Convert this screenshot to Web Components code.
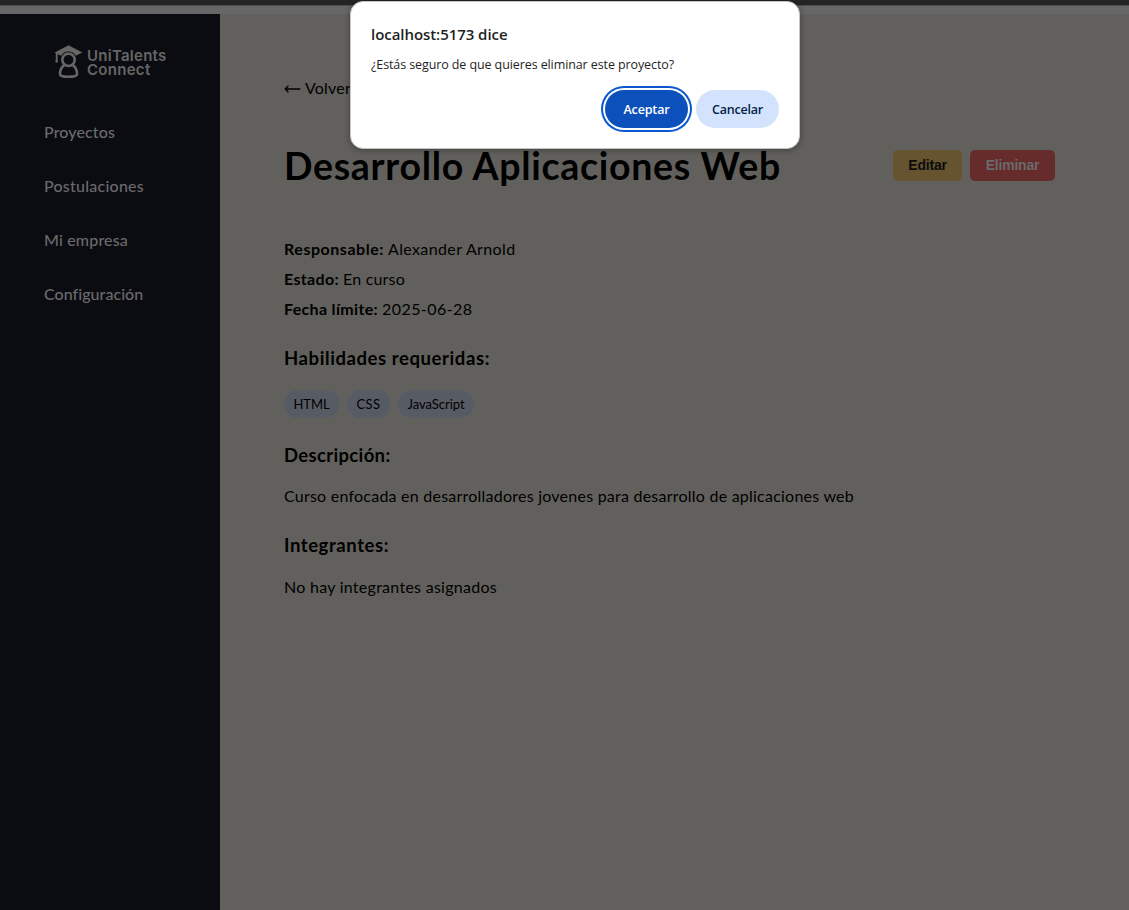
<!DOCTYPE html>
<html lang="es">
<head>
<meta charset="utf-8">
<title>UniTalents Connect</title>
<style>
html, body { margin: 0; height: 100%; overflow: hidden; background: #62605d; }
body { font-family: Lato, "Noto Sans", sans-serif; color: #000; }
</style>
</head>
<body>
<app-shell></app-shell>
<script>
const define = (name, html, ready) => {
  const tpl = document.createElement('template');
  tpl.innerHTML = html;
  customElements.define(name, class extends HTMLElement {
    constructor() {
      super();
      this.attachShadow({ mode: 'open' }).appendChild(tpl.content.cloneNode(true));
    }
    connectedCallback() { if (ready) ready(this); }
  });
};

// Text whose tracking is adjusted so the line takes the width given in "w".
define('ui-text', `<style>:host{display:inline-block;white-space:nowrap}span{display:inline-block}</style><span><slot></slot></span>`, el => {
  const w = parseFloat(el.getAttribute('w'));
  const span = el.shadowRoot.querySelector('span');
  span.style.letterSpacing = '0';
  const natural = span.getBoundingClientRect().width;
  span.style.letterSpacing = ((w - natural) / el.textContent.length) + 'px';
});

define('brand-logo', `<style>
:host{display:flex;align-items:center;gap:4px;height:34px;color:#666;font:600 15px/14px Inter,sans-serif}
svg{display:block;width:29px;height:34px;flex:none}
div{display:flex;flex-direction:column;padding-top:2px}
ui-text{height:14px}
</style>
<svg viewBox="0 0 29 34"><path d="M14.500 .3 28.300 7.500 21.700 10.800C20 7.700 17.700 6.500 14.500 6.500S9 7.700 7.300 10.800L3.600 9.200V16H1.800V8.600L.7 7.500Z" fill="currentColor"/><circle cx="2.700" cy="16.500" r="1.300" fill="currentColor"/><circle cx="14.500" cy="14.800" r="6.200" fill="none" stroke="currentColor" stroke-width="2.600"/><path d="M10.200 20.100C7 22.500 5.900 25.500 6 29.100 6.100 31.200 10.200 31.800 14.500 31.800S22.900 31.200 23 29.100C23.100 25.500 22 22.500 18.800 20.100" fill="none" stroke="currentColor" stroke-width="2.600"/></svg>
<div><ui-text w="79.500">UniTalents</ui-text><ui-text w="63.500">Connect</ui-text></div>`);

define('nav-item', `<style>:host{display:block;height:24px;line-height:22px;font-size:16px;font-weight:500;color:#6a6a6c}</style><slot></slot>`);

define('side-bar', `<style>
:host{display:block;width:220px;box-sizing:border-box;background:#0b0c11;padding:31px 0 0 44px}
brand-logo{margin-left:10px}
nav{display:flex;flex-direction:column;gap:30px;margin-top:42px}
</style>
<brand-logo></brand-logo>
<nav>
<nav-item><ui-text w="71">Proyectos</ui-text></nav-item>
<nav-item><ui-text w="100">Postulaciones</ui-text></nav-item>
<nav-item><ui-text w="84">Mi empresa</ui-text></nav-item>
<nav-item><ui-text w="99">Configuración</ui-text></nav-item>
</nav>`);

define('action-button', `<style>
:host{display:block}
button{display:block;width:var(--w);height:31px;padding:0;border:0;border-radius:5px;background:var(--bg);color:var(--fg);font:bold 14px/31px "Liberation Sans",Arial,sans-serif}
</style><button><slot></slot></button>`);

define('skill-chip', `<style>:host{display:block;box-sizing:border-box;height:28px;border-radius:14px;padding:0 9.500px;background:#575b64;font-size:13px;line-height:28px}</style><slot></slot>`);

define('section-title', `<style>:host{display:block}h3{margin:0;height:24px;line-height:24px;font-size:18.500px;font-weight:700}</style><h3><slot></slot></h3>`);

define('project-detail', `<style>
:host{display:block;flex:1;padding:63px 74px 0 64px;font-size:16px}
a{height:24px;line-height:22px;display:flex;gap:4px}
svg{display:block;width:17px;height:12px;margin-top:6px}
header{display:flex;align-items:center;justify-content:space-between;margin-top:40px;height:48px}
h1{margin:0;font-size:37.500px;line-height:49px;height:48px;font-weight:700}
.actions{display:flex;gap:8px}
.facts{margin-top:46px}
.facts p{display:flex;gap:4px;height:30px;line-height:28px}
p{margin:0}
.skills{display:flex;gap:8px;margin-top:20px}
.body{line-height:22px;height:24px;margin-top:18px}
</style>
<a><svg viewBox="0 0 17 12" fill="none" stroke="#000" stroke-width="1.300"><path d="M16.300 6H1.200M4.400 2.800 1.200 6l3.200 3.200"/></svg><ui-text w="46">Volver</ui-text></a>
<header>
<h1><ui-text w="497">Desarrollo Aplicaciones Web</ui-text></h1>
<div class="actions">
<action-button style="--w:69px;--bg:#66532f;--fg:#0c0c0c"><ui-text w="38.500">Editar</ui-text></action-button>
<action-button style="--w:85px;--bg:#662b2b;--fg:#6a6a6c"><ui-text w="53.500">Eliminar</ui-text></action-button>
</div>
</header>
<div class="facts">
<p><b><ui-text w="100">Responsable:</ui-text></b><ui-text w="127.500">Alexander Arnold</ui-text></p>
<p><b><ui-text w="55">Estado:</ui-text></b><ui-text w="62">En curso</ui-text></p>
<p><b><ui-text w="94">Fecha límite:</ui-text></b><ui-text w="90.500">2025-06-28</ui-text></p>
</div>
<section-title style="margin-top:21px"><ui-text w="206">Habilidades requeridas:</ui-text></section-title>
<div class="skills">
<skill-chip><ui-text w="36">HTML</ui-text></skill-chip>
<skill-chip><ui-text w="24">CSS</ui-text></skill-chip>
<skill-chip><ui-text w="57">JavaScript</ui-text></skill-chip>
</div>
<section-title style="margin-top:25px"><ui-text w="106.500">Descripción:</ui-text></section-title>
<p class="body"><ui-text w="570">Curso enfocada en desarrolladores jovenes para desarrollo de aplicaciones web</ui-text></p>
<section-title style="margin-top:24px"><ui-text w="105">Integrantes:</ui-text></section-title>
<p class="body" style="margin-top:19px"><ui-text w="213">No hay integrantes asignados</ui-text></p>`);

define('confirm-dialog', `<style>
:host{display:block;position:absolute;left:350px;top:1px;width:450px;height:148px;box-sizing:border-box;padding:20px 20px 0;background:#fff;border:1px solid #c4c4c4;border-radius:13px;box-shadow:0 1px 6px rgba(0,0,0,.35);font-family:"Open Sans","Noto Sans",sans-serif;color:#1f1f1f}
h2{margin:0;font-size:15px;line-height:24px;height:24px;font-weight:600}
p{margin:9px 0 0;font-size:12.500px;line-height:20px;height:20px}
.row{display:flex;justify-content:flex-end;gap:8px;margin-top:15px}
button{display:block;height:38px;padding:2px 0 0;border:0;border-radius:19px;font:600 12.500px/36px "Open Sans","Noto Sans",sans-serif}
.ok{width:83px;background:#0b50bb;color:#fff;box-shadow:0 0 0 2px #fff,0 0 0 4px #0b57d0}
.no{width:83px;background:#d3e3fd;color:#041e49}
</style>
<h2><ui-text w="136.500">localhost:5173 dice</ui-text></h2>
<p><ui-text w="303">¿Estás seguro de que quieres eliminar este proyecto?</ui-text></p>
<div class="row"><button class="ok"><ui-text w="46">Aceptar</ui-text></button><button class="no"><ui-text w="51">Cancelar</ui-text></button></div>`);

define('app-shell', `<style>
:host{display:flex;flex-direction:column;height:100vh;position:relative}
.edge{height:5px;background:#242424;flex:none}
.bar{height:9px;box-sizing:border-box;background:#666;border-top:1px solid #4c4c4c;flex:none}
main{display:flex;flex:1}
</style>
<div class="edge"></div><div class="bar"></div>
<main><side-bar></side-bar><project-detail></project-detail></main>
<confirm-dialog></confirm-dialog>`);
</script>
</body>
</html>
